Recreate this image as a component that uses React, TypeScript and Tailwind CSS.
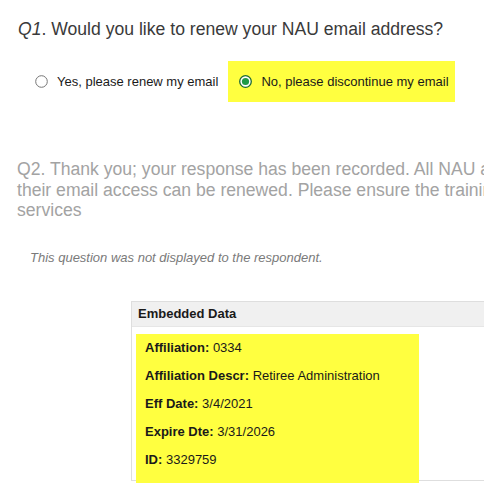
import React from "react";

function Radio({ checked }: { checked: boolean }) {
  return (
    <svg width="13" height="13" viewBox="0 0 13 13" className="shrink-0">
      {checked ? (
        <>
          <circle cx="6.5" cy="6.5" r="5.8" fill="#ffffff" stroke="#1d6b34" strokeWidth="1.3" />
          <circle cx="6.5" cy="6.5" r="3.6" fill="#1f9a45" />
        </>
      ) : (
        <circle cx="6.5" cy="6.5" r="5.8" fill="#ffffff" stroke="#767676" strokeWidth="1" />
      )}
    </svg>
  );
}

const rows: [string, string][] = [
  ["Affiliation:", "0334"],
  ["Affiliation Descr:", "Retiree Administration"],
  ["Eff Date:", "3/4/2021"],
  ["Expire Dte:", "3/31/2026"],
  ["ID:", "3329759"],
];

export default function App() {
  return (
    <div
      className="w-[484px] h-[489px] overflow-hidden bg-white relative"
      style={{ fontFamily: '"Liberation Sans", Arial, sans-serif' }}
    >
      <div className="pl-[18px] pt-[19px] text-[17.6px] leading-[21px] text-[#3a3a3a] whitespace-nowrap">
        <span className="italic">Q1</span>. Would you like to renew your NAU email address?
      </div>

      <div className="flex items-center gap-[4px] pl-[24px] mt-[21px] text-[13px] text-[#1a1a1a]">
        <div className="flex items-center h-[41px] pl-[11px] pr-[6px] gap-[9px]">
          <Radio checked={false} />
          <span>Yes, please renew my email</span>
        </div>
        <div className="flex items-center h-[41px] pl-[11px] pr-[6px] gap-[9px] bg-[#ffff40]">
          <Radio checked={true} />
          <span>No, please discontinue my email</span>
        </div>
      </div>

      <div className="pl-[17px] mt-[57px] text-[17.6px] leading-[20.5px] text-[#a3a3a3] whitespace-nowrap">
        <div>Q2. Thank you; your response has been recorded. All NAU affiliates must complete training before</div>
        <div>their email access can be renewed. Please ensure the training is completed to continue using NAU</div>
        <div>services</div>
      </div>

      <div className="pl-[30px] mt-[27px] text-[13px] italic text-[#7a7a7a] whitespace-nowrap">
        This question was not displayed to the respondent.
      </div>

      <div className="ml-[131px] mt-[34px] w-[400px] border-l border-t border-b border-[#dedede]">
        <div className="h-[25px] bg-[#f0f0f0] border-b border-[#e6e6e6] flex items-center pl-[6px] text-[13px] font-bold text-[#1a1a1a]">
          Embedded Data
        </div>
        <div className="pt-[7px] pl-[4px]">
          <div className="w-[283px] bg-[#ffff40] pl-[9px] pb-[9px] -mb-[3px] relative text-[13px] text-[#1a1a1a]">
            {rows.map(([k, v]) => (
              <div key={k} className="h-[28px] flex items-center whitespace-nowrap">
                <span className="font-bold">{k}</span>
                <span>&nbsp;{v}</span>
              </div>
            ))}
          </div>
        </div>
      </div>
    </div>
  );
}
